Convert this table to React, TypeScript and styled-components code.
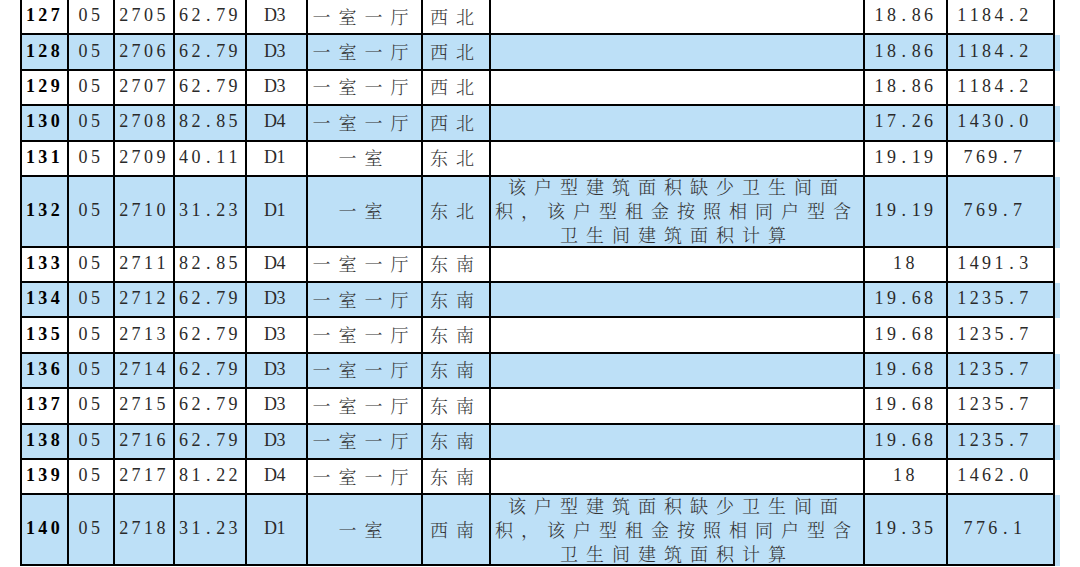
import React from "react";
import styled, { createGlobalStyle } from "styled-components";

const GlobalStyle = createGlobalStyle`
  html, body { margin: 0; padding: 0; background: #ffffff; }
  body { width: 1080px; height: 567px; overflow: hidden; }
`;

const UNIT = 35.38;
const CJK = `"Noto Serif CJK SC", "Noto Sans CJK SC", "Noto Sans CJK JP", serif`;
const LATIN = `"Liberation Serif", "Times New Roman", serif`;

const Sheet = styled.div`
  padding-left: 20px;
  color: #1e1e1e;
`;

const Row = styled.div<{ $units: number; $shaded: boolean }>`
  display: grid;
  grid-template-columns: 47px 46px 60px 72px 61px 115px 68px 374px 83px 109px 5px;
  grid-template-rows: minmax(0, 1fr);
  height: ${(p) => p.$units * UNIT}px;
  width: 1040px;
  background: ${(p) => (p.$shaded ? "#bde0f7" : "#ffffff")};
`;

const Cell = styled.div<{ $last?: boolean; $padRight?: number }>`
  box-sizing: border-box;
  min-height: 0;
  height: 100%;
  display: flex;
  align-items: center;
  justify-content: center;
  border-left: 2px solid #000;
  border-bottom: 2px solid #000;
  ${(p) => (p.$last ? "border-right: 2px solid #000;" : "")}
  padding-right: ${(p) => p.$padRight ?? 0}px;
  padding-bottom: 2px;
  font-family: ${LATIN};
  font-size: 18px;
  white-space: nowrap;
  color: #2a2a2a;
`;

const NumberCell = styled(Cell)`
  font-weight: 700;
  color: #000;
`;

const HanCell = styled(Cell)`
  font-family: ${CJK};
  font-weight: 300;
  letter-spacing: 8px;
  color: #333;
`;

const NoteCell = styled(Cell)`
  font-family: ${CJK};
  font-weight: 300;
  letter-spacing: 8px;
  line-height: 24px;
  white-space: normal;
  text-align: center;
  padding: 0 2px 2px 2px;
  line-break: strict;
  color: #333;
`;

const Glyph = styled.span`
  display: inline-block;
  width: 9px;
  margin-right: 3.4px;
  text-align: center;
`;

const Mono: React.FC<{ text: string }> = ({ text }) => (
  <>
    {[...text].map((c, i) => (
      <Glyph key={i}>{c}</Glyph>
    ))}
  </>
);

type Rec = {
  no: string;
  bld: string;
  room: string;
  area: string;
  type: string;
  layout: string;
  facing: string;
  note?: boolean;
  price: string;
  rent: string;
};

const NOTE = "该户型建筑面积缺少卫生间面积，该户型租金按照相同户型含卫生间建筑面积计算";

const rows: Rec[] = [
  { no: "127", bld: "05", room: "2705", area: "62.79", type: "D3", layout: "一室一厅", facing: "西北", price: "18.86", rent: "1184.2" },
  { no: "128", bld: "05", room: "2706", area: "62.79", type: "D3", layout: "一室一厅", facing: "西北", price: "18.86", rent: "1184.2" },
  { no: "129", bld: "05", room: "2707", area: "62.79", type: "D3", layout: "一室一厅", facing: "西北", price: "18.86", rent: "1184.2" },
  { no: "130", bld: "05", room: "2708", area: "82.85", type: "D4", layout: "一室一厅", facing: "西北", price: "17.26", rent: "1430.0" },
  { no: "131", bld: "05", room: "2709", area: "40.11", type: "D1", layout: "一室", facing: "东北", price: "19.19", rent: "769.7" },
  { no: "132", bld: "05", room: "2710", area: "31.23", type: "D1", layout: "一室", facing: "东北", note: true, price: "19.19", rent: "769.7" },
  { no: "133", bld: "05", room: "2711", area: "82.85", type: "D4", layout: "一室一厅", facing: "东南", price: "18", rent: "1491.3" },
  { no: "134", bld: "05", room: "2712", area: "62.79", type: "D3", layout: "一室一厅", facing: "东南", price: "19.68", rent: "1235.7" },
  { no: "135", bld: "05", room: "2713", area: "62.79", type: "D3", layout: "一室一厅", facing: "东南", price: "19.68", rent: "1235.7" },
  { no: "136", bld: "05", room: "2714", area: "62.79", type: "D3", layout: "一室一厅", facing: "东南", price: "19.68", rent: "1235.7" },
  { no: "137", bld: "05", room: "2715", area: "62.79", type: "D3", layout: "一室一厅", facing: "东南", price: "19.68", rent: "1235.7" },
  { no: "138", bld: "05", room: "2716", area: "62.79", type: "D3", layout: "一室一厅", facing: "东南", price: "19.68", rent: "1235.7" },
  { no: "139", bld: "05", room: "2717", area: "81.22", type: "D4", layout: "一室一厅", facing: "东南", price: "18", rent: "1462.0" },
  { no: "140", bld: "05", room: "2718", area: "31.23", type: "D1", layout: "一室", facing: "西南", note: true, price: "19.35", rent: "776.1" },
];

export default function App() {
  return (
    <>
      <GlobalStyle />
      <Sheet>
        {rows.map((r) => (
          <Row key={r.no} $units={r.note ? 2 : 1} $shaded={Number(r.no) % 2 === 0}>
            <NumberCell>
              <Mono text={r.no} />
            </NumberCell>
            <Cell>
              <Mono text={r.bld} />
            </Cell>
            <Cell>
              <Mono text={r.room} />
            </Cell>
            <Cell>
              <Mono text={r.area} />
            </Cell>
            <Cell>
              <Mono text={r.type} />
            </Cell>
            <HanCell>{r.layout}</HanCell>
            <HanCell>{r.facing}</HanCell>
            <NoteCell>{r.note ? NOTE : ""}</NoteCell>
            <Cell>
              <Mono text={r.price} />
            </Cell>
            <Cell $last $padRight={12}>
              <Mono text={r.rent} />
            </Cell>
          </Row>
        ))}
      </Sheet>
    </>
  );
}
